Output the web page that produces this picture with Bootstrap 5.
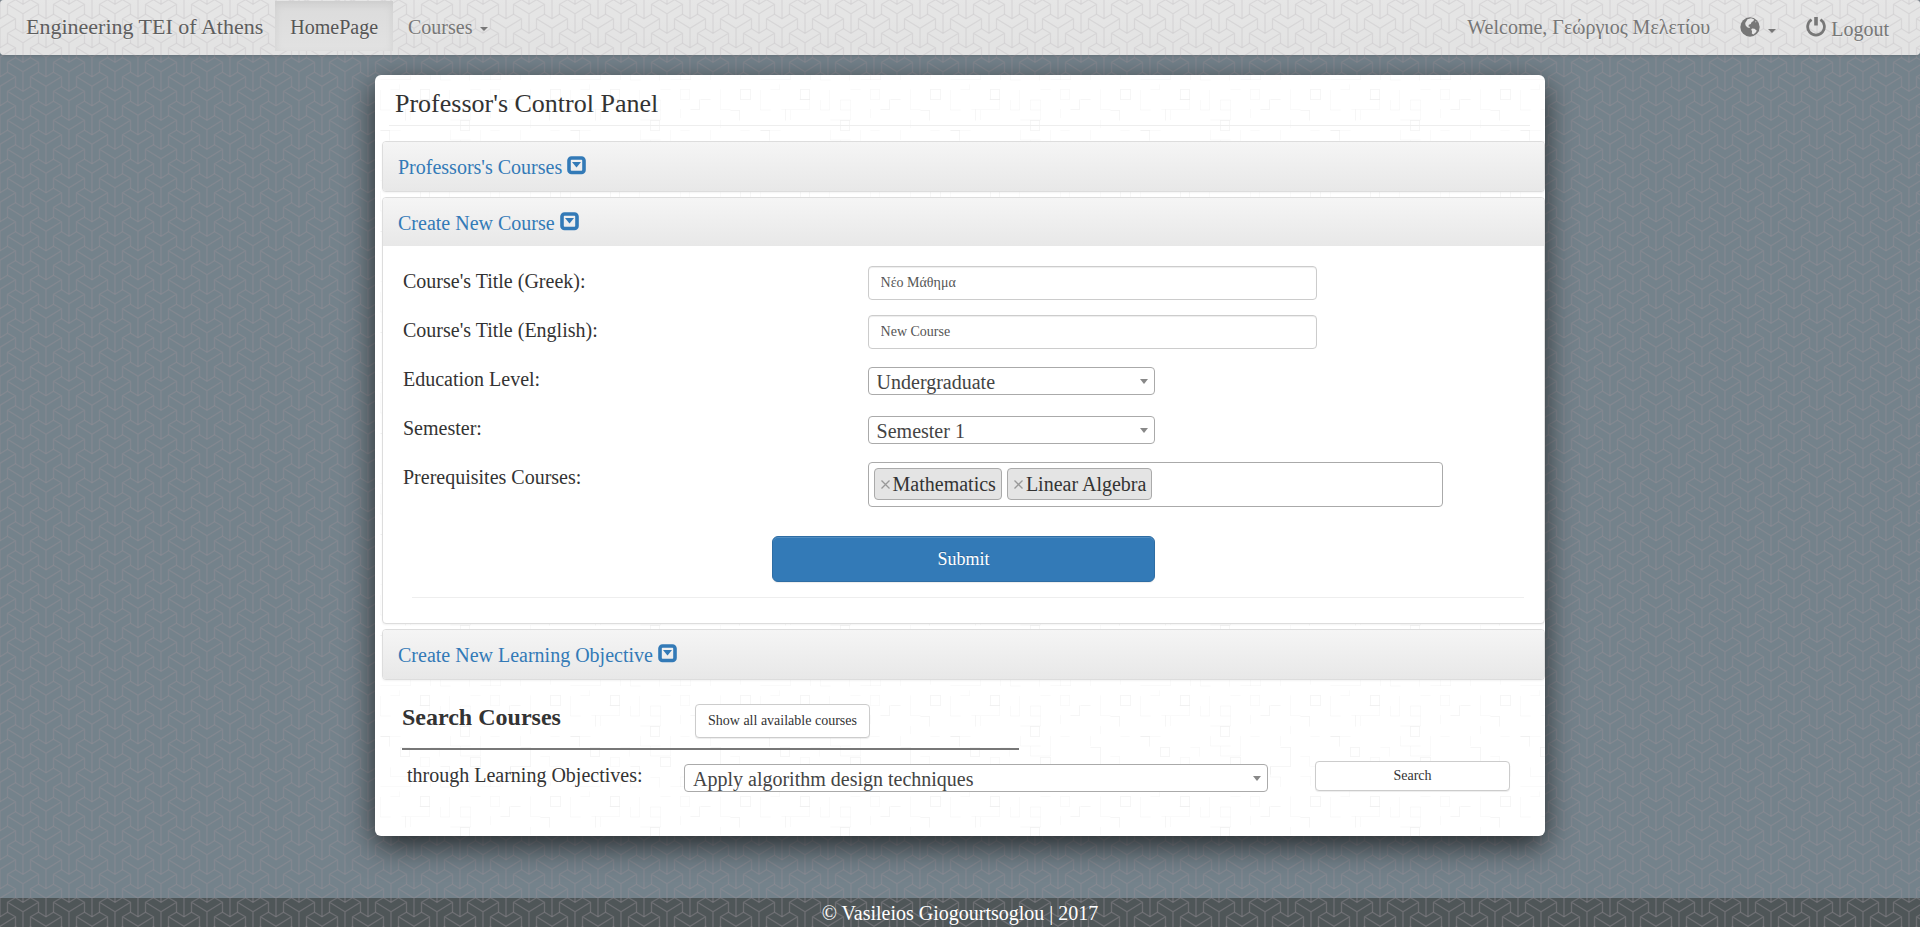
<!DOCTYPE html>
<html lang="en">
<head>
<meta charset="utf-8">
<meta name="viewport" content="width=device-width, initial-scale=1">
<title>Professor's Control Panel</title>
<link href="https://cdn.jsdelivr.net/npm/bootstrap@5.3.0/dist/css/bootstrap.min.css" rel="stylesheet">
<style>
:root {
  --weave: url("data:image/svg+xml,%3Csvg xmlns='http://www.w3.org/2000/svg' width='46' height='29'%3E%3Cdefs%3E%3Cpath id='a' d='M-15.500 10V0L-7.500-4.500L0 0L7.500-4.500L15.500 0V10M-15.500 0L0 9.500L15.500 0M0 9.500V29'/%3E%3C/defs%3E%3Cg fill='none' stroke='%23969096' stroke-opacity='.42' stroke-width='1.300'%3E%3Cuse href='%23a' x='23' y='4.300'/%3E%3Cuse href='%23a' x='23' y='-24.700'/%3E%3Cuse href='%23a' x='23' y='33.300'/%3E%3Cuse href='%23a' x='0' y='18.800'/%3E%3Cuse href='%23a' x='0' y='-10.200'/%3E%3Cuse href='%23a' x='46' y='18.800'/%3E%3Cuse href='%23a' x='46' y='-10.200'/%3E%3C/g%3E%3C/svg%3E");
  --mosaic: url("data:image/svg+xml,%3Csvg xmlns='http://www.w3.org/2000/svg' width='190' height='101'%3E%3Cg fill='none' stroke='%23000' stroke-opacity='.035'%3E%3Cpath d='M45.500 5.500h9v10h-9zM85.500 36.500h9v10h-9zM25.500 57.500h9v9h-9zM175.500 5.500h10v10h-10zM135.500 15.500h10M134.500 15.500v10h-9M95.500 67.500h10v9h-10zM165.500 26.500h9v10M65.500 76.500h9v9M5.500 46.500h9v10M145.500 57.500h10v19h-20v8M30.500 36.500v-11'/%3E%3C/g%3E%3Cg fill='none' stroke='%23000' stroke-opacity='.02'%3E%3Cpath d='M5.500 6v20h10M15.500 5.500h9v-5M44.500 15.500h10v10h-28M65.500 16v10h9v-20M85.500 16h10v10h-10zM75.500 46v10h20M95.500 5.500h10M95.500 26v10h-20M115.500 5.500h9v10h-9zM115.500 25v9M5.500 46.500h20M35.500 26v10M45.500 67.500h9v9h-9zM55.500 57.500h9v9M85.500 56v10h20v-20M115.500 46.500h9M115.500 97v-10h10v10M135.500 77v10h10v10M165.500 66.500h9v10M175.500 76.500h10v10M155.500 5.500v20h10M145.500 46v10M175.500 46.500h9M155.500 36v8M5.500 96.500h30v-10h-20v-9M55.500 97v-10h10v10h10M85.500 87.500h9v10M105.500 96.500h20M165.500 86.500h10v9'/%3E%3C/g%3E%3C/svg%3E");
}
body { font-family: "Liberation Serif", serif; font-size: 20px; line-height: 28px; color: #333; background: #74828b var(--weave); }
a { color: #337ab7; text-decoration: none; }

.topbar { min-height: 55px; padding: 1px 16px 2px 11px; border-radius: 4px; background-color: #e4e4e4; background-image: var(--weave), linear-gradient(#e8e8e8, #e0e0e0); box-shadow: 0 1px 3px rgba(0,0,0,.12); text-shadow: 0 1px 0 rgba(255,255,255,.3); position: relative; overflow: hidden; }
.topbar::before { content: ""; position: absolute; inset: 0; background: rgba(228,228,228,.6); }
.topbar > * { position: relative; }
.topbar .navbar-brand { font-size: 22px; line-height: 28px; color: #5e5e5e; padding: 12px 12px 10px 15px; margin: 0; }
.topbar .nav-link { color: #777; padding: 12px 15px 10px; line-height: 28px; white-space: nowrap; }
.topbar .nav-link.active { color: #555; background: linear-gradient(#dbdbdb, #e2e2e2); box-shadow: inset 0 3px 9px rgba(0,0,0,.075); }
.caret { display: inline-block; border-top: 4px solid; border-left: 4px solid transparent; border-right: 4px solid transparent; vertical-align: middle; margin-left: 3px; }
.topbar .nav-text { padding: 12px 15px 10px; color: #777; }
.topbar .tools .nav-link { padding-top: 14px; }
.topbar .tools svg { vertical-align: -1px; }

.sheet { width: calc(100% - 30px); max-width: 1170px; margin: 20px auto 60px; border-radius: 6px; background: #fff var(--mosaic) 0 9px; box-shadow: 0 10px 30px rgba(0,0,0,.7); padding-left: 7px; padding-bottom: 44px; }
.sheet h1 { font-size: 26px; line-height: 30px; font-weight: 400; margin: 0 15px 15px 7px; padding: 14px 0 6px 6px; border-bottom: 1px solid #eee; }
.fold { border: 1px solid #ddd; border-radius: 4px; background: #fff; box-shadow: 0 1px 2px rgba(0,0,0,.05); margin-bottom: 5px; }
.fold-head { padding: 11px 15px 10px; background: linear-gradient(#f5f5f5, #e8e8e8); border-radius: 3px; font-size: 20px; line-height: 28px; margin: 0; font-weight: 400; }
.fold-open .fold-head { padding-bottom: 9px; border-radius: 3px 3px 0 0; }
.fold-head svg { width: 19px; height: 19px; vertical-align: -1px; }
.fold-body { padding: 20px 5px 25px; }
.fold-body .caption { padding: 1px 0 0 15px; }
.line-row { min-height: 49px; }
.field { height: 34px; border: 1px solid #ccc; border-radius: 4px; box-shadow: inset 0 1px 1px rgba(0,0,0,.075); font-size: 14px; line-height: 20px; padding: 6px 12px; color: #555; width: 100%; max-width: 449px; display: block; }
.pick { width: 100%; height: 28px; appearance: none; border: 1px solid #aaa; border-radius: 4px; padding: 2px 26px 0 8px; font-size: 20px; line-height: 24px; color: #444; background: #fff url("data:image/svg+xml,%3Csvg xmlns='http://www.w3.org/2000/svg' width='8' height='5'%3E%3Cpath fill='%23888' d='M0 0h8L4 5z'/%3E%3C/svg%3E") no-repeat right 6px center; display: block; }
.pick-cell { padding-top: 3px; }
.tagbox { min-height: 45px; border: 1px solid #aaa; border-radius: 4px; background: #fff; padding: 5px; gap: 5px; }
.tag { height: 32px; line-height: 31px; background: #e4e4e4; border: 1px solid #aaa; border-radius: 4px; padding: 0 5px; display: flex; white-space: nowrap; }
.tag button { border: 0; background: none; padding: 0 2px 0 0; width: 13px; display: flex; align-items: center; justify-content: center; }
.submit-row { margin-top: 29px; }
.send { height: 46px; font-size: 18px; line-height: 24px; background: #337ab7; border: 1px solid #2e6da4; border-radius: 6px; color: #fff; padding: 10px 16px; box-shadow: inset 0 1px 0 rgba(255,255,255,.15), 0 1px 1px rgba(0,0,0,.075); text-shadow: 0 -1px 0 rgba(0,0,0,.2); }
.rule { height: 1px; background: #eee; margin: 15px 15px 0 24px; }
.plain { background: #fff; border: 1px solid #ccc; border-radius: 4px; color: #333; font-size: 14px; line-height: 20px; padding: 6px 12px; box-shadow: 0 1px 1px rgba(0,0,0,.075); }
.finder { padding-top: 19px; padding-left: 9px; }
.finder-top { display: grid; grid-template-columns: 293fr 850fr; margin-left: 11px; align-items: start; }
.finder-top h2 { font-size: 24px; line-height: 26px; font-weight: 700; margin: 0; }
.bar { width: 53.5%; height: 2px; background: #777; margin: 10px 0 11px 11px; }
.finder-row { display: grid; grid-template-columns: 293fr 584fr 47fr 195fr 35fr; align-items: start; }
.finder-row label { padding-left: 16px; }
.slim { padding: 4px 12px; grid-column: 4; }
.foot { background: #4f5658 var(--weave); color: #fff; font-size: 20px; line-height: 28px; padding-top: 1px; text-align: center; }
</style>
</head>
<body class="d-flex flex-column min-vh-100">
<nav class="topbar d-flex flex-wrap align-items-start">
  <a class="navbar-brand" href="#">Engineering TEI of Athens</a>
  <a class="nav-link active" href="#" aria-current="page">HomePage</a>
  <a class="nav-link" href="#">Courses <span class="caret"></span></a>
  <div class="tools d-flex flex-wrap ms-auto">
    <span class="nav-text">Welcome, Γεώργιος Μελετίου</span>
    <a class="nav-link" href="#" aria-label="Language"><svg width="20" height="20" viewBox="0 0 20 20"><circle cx="10" cy="10" r="9.700" fill="#777"/><path fill="#e6e6e6" d="M7.500 2.200l3.500-.9 3 .9-.5 1.800-1.800 1-1 2-1.800.7-.5 1.600 1.800.6-1 1-2-.7-1.700-2-.3-2.200zM12 11.500l2.500.3 2.300 2-1.300 2-2.200 1.600-1.500-1 .2-2.400-.8-1.300zM15 4.200l1.500.5-.8.9z"/></svg> <span class="caret"></span></a>
    <a class="nav-link" href="#"><svg width="20" height="20" viewBox="0 0 20 20" fill="none" stroke="#777"><path d="M5.600 2.600a8.400 8.400 0 1 0 8.800 0" stroke-width="2.700"/><path d="M10 0v8.500" stroke-width="3.600"/></svg> Logout</a>
  </div>
</nav>

<svg class="d-none"><symbol id="drop" viewBox="0 0 19 19"><rect x="2" y="2" width="15" height="14.500" rx="2.500" fill="none" stroke="#337ab7" stroke-width="3.600"/><path d="M5 6h9l-4.500 5.500z" fill="#337ab7"/></symbol></svg>

<main class="sheet">
  <h1>Professor's Control Panel</h1>

  <section class="fold">
    <h2 class="fold-head"><a href="#">Professors's Courses <svg><use href="#drop"/></svg></a></h2>
  </section>

  <section class="fold fold-open">
    <h2 class="fold-head"><a href="#">Create New Course <svg><use href="#drop"/></svg></a></h2>
    <form class="fold-body">
      <div class="row g-0 line-row"><label class="caption col-5" for="titleGr">Course's Title (Greek):</label><div class="col-6"><input class="field" id="titleGr" type="text" value="Νέο Μάθημα"></div></div>
      <div class="row g-0 line-row"><label class="caption col-5" for="titleEn">Course's Title (English):</label><div class="col-6"><input class="field" id="titleEn" type="text" value="New Course"></div></div>
      <div class="row g-0 line-row"><label class="caption col-5" for="level">Education Level:</label><div class="col-3 pick-cell"><select class="pick" id="level"><option>Undergraduate</option></select></div></div>
      <div class="row g-0 line-row"><label class="caption col-5" for="semester">Semester:</label><div class="col-3 pick-cell"><select class="pick" id="semester"><option>Semester 1</option></select></div></div>
      <div class="row g-0"><span class="caption col-5">Prerequisites Courses:</span><div class="col-6"><div class="tagbox d-flex flex-wrap">
        <span class="tag"><button type="button" aria-label="Remove Mathematics"><svg width="9" height="9" stroke="#999" stroke-width="1.300"><path d="M.5.5l8 8M8.500.5l-8 8"/></svg></button>Mathematics</span>
        <span class="tag"><button type="button" aria-label="Remove Linear Algebra"><svg width="9" height="9" stroke="#999" stroke-width="1.300"><path d="M.5.5l8 8M8.500.5l-8 8"/></svg></button>Linear Algebra</span>
      </div></div></div>
      <div class="row g-0 submit-row"><button class="send col-4 offset-4" type="button">Submit</button></div>
      <div class="rule"></div>
    </form>
  </section>

  <section class="fold">
    <h2 class="fold-head"><a href="#">Create New Learning Objective <svg><use href="#drop"/></svg></a></h2>
  </section>

  <section class="finder">
    <div class="finder-top"><h2>Search Courses</h2><div><button class="plain" type="button">Show all available courses</button></div></div>
    <div class="bar"></div>
    <div class="finder-row">
      <label for="objective">through Learning Objectives:</label>
      <div class="pick-cell"><select class="pick" id="objective"><option>Apply algorithm design techniques</option></select></div>
      <button class="plain slim" type="button">Search</button>
    </div>
  </section>
</main>

<footer class="foot mt-auto">© Vasileios Giogourtsoglou | 2017</footer>
<script src="https://cdn.jsdelivr.net/npm/bootstrap@5.3.0/dist/js/bootstrap.bundle.min.js"></script>
</body>
</html>
